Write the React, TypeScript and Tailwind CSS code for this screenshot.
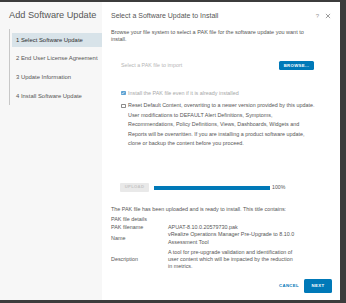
import React from "react";

const font = { fontFamily: '"Liberation Sans", Arial, sans-serif' };

function Step({ label, active }: { label: string; active?: boolean }) {
  return (
    <div
      className={`h-[14px] flex items-center pl-[4px] text-[5.9px] whitespace-nowrap ${
        active ? "bg-[#d8e3e9] text-[#2f2f2f]" : "text-[#565656]"
      }`}
    >
      {label}
    </div>
  );
}

export default function App() {
  return (
    <div className="w-[346px] h-[303px] bg-[#3c3c3c] pt-[2px] overflow-hidden" style={font}>
      <div className="flex w-[340px] h-[298px] bg-white">
        {/* Left panel */}
        <div className="w-[102px] shrink-0 bg-[#f7f7f7] flex flex-col">
          <div className="mt-[7px] h-[14px] flex items-center pl-[9px] text-[9.2px] text-[#565656] whitespace-nowrap">
            Add Software Update
          </div>
          <div className="mt-[6px] ml-[9px] border-l border-[#c8c8c8] pl-[2px] pt-[4px] pb-[2px] flex flex-col gap-[4.7px]">
            <Step label="1 Select Software Update" active />
            <Step label="2 End User License Agreement" />
            <Step label="3 Update Information" />
            <Step label="4 Install Software Update" />
          </div>
        </div>

        {/* Right panel */}
        <div className="flex-1 flex flex-col pl-[9px] pr-[8px] text-[#565656]">
          <div className="mt-[7px] h-[14px] flex items-center justify-between">
            <span className="text-[7px] text-[#565656] whitespace-nowrap">
              Select a Software Update to Install
            </span>
            <div className="flex items-center gap-[6px] pr-[1px] text-[#9a9a9a]">
              <span className="text-[6px]">?</span>
              <svg width="6" height="6" viewBox="0 0 10 10">
                <path d="M1.5 1.5 L8.5 8.5 M8.5 1.5 L1.5 8.5" stroke="#8a8a8a" strokeWidth="1.4" />
              </svg>
            </div>
          </div>

          <div className="mt-[5.8px] text-[5.5px] leading-[7px] whitespace-nowrap">
            <div>Browse your file system to select a PAK file for the software update you want to</div>
            <div>install.</div>
          </div>

          <div className="mt-[18.7px] h-[9px] flex items-center justify-between pl-[10px] pr-[18px]">
            <span className="text-[5.3px] text-[#b5b5b5]">Select a PAK file to import</span>
            <div className="w-[35px] h-[9px] bg-[#0079b8] rounded-[1.5px] flex items-center justify-center text-white text-[4.3px] font-bold tracking-[0.3px]">
              BROWSE...
            </div>
          </div>

          <div className="mt-[19px] h-[7px] flex items-center pl-[10px] gap-[2.5px]">
            <div className="w-[4.5px] h-[4.5px] bg-[#5fa3d3] rounded-[0.8px] flex items-center justify-center">
              <svg width="4" height="4" viewBox="0 0 10 10">
                <path d="M2 5.2 L4.2 7.4 L8.2 2.8" stroke="white" strokeWidth="1.8" fill="none" />
              </svg>
            </div>
            <span className="text-[5.4px] text-[#a8a8a8] whitespace-nowrap">
              Install the PAK file even if it is already installed
            </span>
          </div>

          <div className="mt-[4.8px] flex pl-[10px] gap-[2.5px]">
            <div className="mt-[2.5px] w-[4.5px] h-[4.5px] border-[0.6px] border-[#8c8c8c] rounded-[0.8px] bg-white shrink-0" />
            <div className="text-[5.4px] leading-[9.4px] whitespace-nowrap text-[#565656]">
              <div>Reset Default Content, overwriting to a newer version provided by this update.</div>
              <div>User modifications to DEFAULT Alert Definitions, Symptoms,</div>
              <div>Recommendations, Policy Definitions, Views, Dashboards, Widgets and</div>
              <div>Reports will be overwritten. If you are installing a product software update,</div>
              <div>clone or backup the content before you proceed.</div>
            </div>
          </div>

          <div className="mt-[34.4px] h-[9.3px] flex items-center pl-[9px]">
            <div className="w-[29px] h-[9.3px] bg-[#e9e9e9] rounded-[1px] flex items-center justify-center text-[4.2px] font-bold text-[#c6c6c6] tracking-[0.3px]">
              UPLOAD
            </div>
            <div className="ml-[5px] w-[116px] h-[4.4px] bg-[#0079b8] mt-[1px]" />
            <span className="ml-[2px] text-[5.2px] text-[#565656] mt-[1px]">100%</span>
          </div>

          <div className="mt-[13.3px] text-[5.4px] leading-[9.3px] whitespace-nowrap">
            <div>The PAK file has been uploaded and is ready to install. This title contains:</div>
            <div>PAK file details</div>
          </div>

          <div className="text-[5.4px] whitespace-nowrap">
            <div className="mt-[0.5px] h-[7px] leading-[7px] flex">
              <span className="w-[57px]">PAK filename</span>
              <span>APUAT-8.10.0.20579730.pak</span>
            </div>
            <div className="flex items-center leading-[7.6px]">
              <span className="w-[57px]">Name</span>
              <div>
                <div>vRealize Operations Manager Pre-Upgrade to 8.10.0</div>
                <div>Assessment Tool</div>
              </div>
            </div>
            <div className="mt-[2.5px] flex items-center leading-[7px]">
              <span className="w-[57px]">Description</span>
              <div>
                <div>A tool for pre-upgrade validation and identification of</div>
                <div>user content which will be impacted by the reduction</div>
                <div>in metrics.</div>
              </div>
            </div>
          </div>

          <div className="mt-[8.8px] flex items-center justify-end gap-[5px]">
            <span className="text-[4.3px] font-bold text-[#0079b8] tracking-[0.35px]">CANCEL</span>
            <div className="w-[28px] h-[14px] bg-[#0079b8] rounded-[1.5px] flex items-center justify-center text-white text-[4.3px] font-bold tracking-[0.35px]">
              NEXT
            </div>
          </div>
        </div>
      </div>
    </div>
  );
}
